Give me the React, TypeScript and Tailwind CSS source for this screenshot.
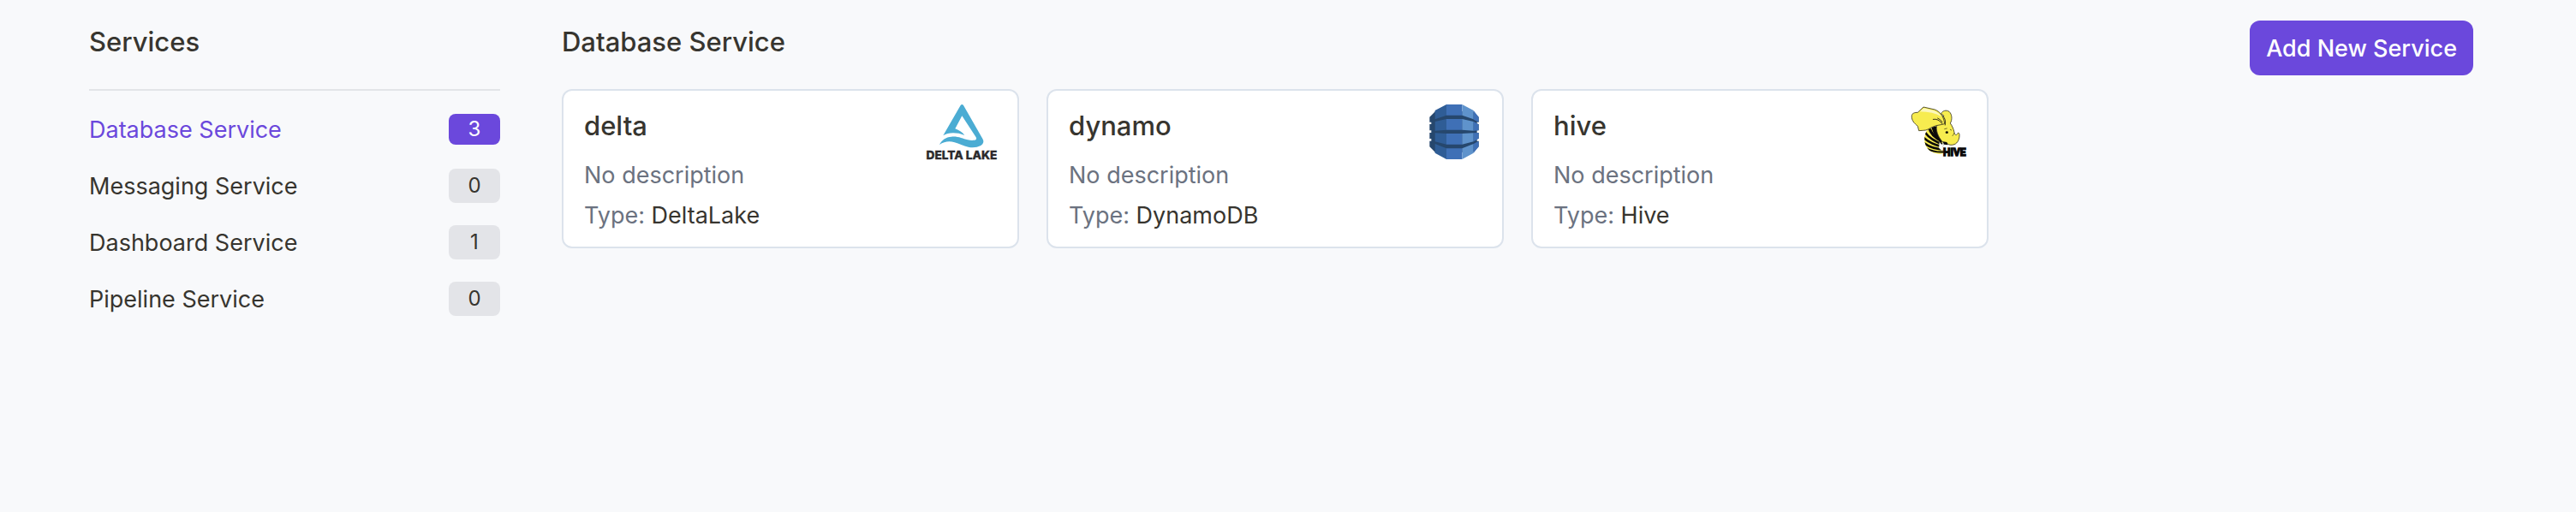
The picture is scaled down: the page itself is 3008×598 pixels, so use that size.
import type { ReactNode } from "react";

function DeltaLakeLogo() {
  return (
    <svg role="img" aria-label="Delta Lake" viewBox="36 36 246 192" className="h-16 w-[82px] overflow-visible">
      <path
        fill="#4bacd3"
        d="M155 39Q160 33 165 39L232 156Q241 170 226 180Q206 190 182 185C164 181 150 174 134 169C115 163 98 166 81 177C88 161 104 150 123 149C147 147 162 156 180 160C194 163 204 162 209 159Q212 157 209 151L160 76L136 121C150 127 162 134 169 144C155 138 142 136 129 136C114 136 104 140 94 145Z"
      />
      <text
        x="159"
        y="228"
        textAnchor="middle"
        fill="#2b2a2c"
        stroke="#2b2a2c"
        strokeWidth="1"
        className="font-['Inter',sans-serif] text-[41px] font-extrabold"
      >
        DELTA LAKE
      </text>
    </svg>
  );
}

function DynamoLogo() {
  return (
    <svg role="img" aria-label="DynamoDB" viewBox="48 36 192 192" className="size-16">
      <path
        fill="#26476d"
        d="M58 80L78 60L210 60L230 80V98H224V105H230V127H224V135H230V156H224V164H230V184L210 204H78L58 184V164H64V156H58V135H64V127H58V105H64V98H58Z"
      />
      <path fill="#2f5d96" d="M117 36L77 57V88L117 74ZM77 96L117 87V125L77 128ZM77 136L117 138V176L77 166ZM77 174L117 190V228L77 206Z" />
      <path fill="#3f70b6" d="M117 36H172V74H117ZM117 87H172V125H117ZM117 138H172V176H117ZM117 190H172V228H117Z" />
      <path fill="#5f93cc" d="M172 36L212 57V88L172 74ZM172 87L212 96V128L172 125ZM172 138L212 136V166L172 176ZM172 190L212 174V206L172 228Z" />
      <path fill="#3f70b6" d="M212 57L230 80V98L212 89ZM212 96L230 105V127L212 128ZM212 136L230 135V156L212 166ZM212 174L230 164V184L212 206Z" />
    </svg>
  );
}

function HiveLogo() {
  return (
    <svg role="img" aria-label="Hive" viewBox="36 36 192 192" className="size-16 overflow-visible">
      <defs>
        <clipPath id="hive-body">
          <path d="M94 122C80 138 78 164 88 184C97 200 116 210 138 209L152 205L138 186L146 170L130 150L122 118Z" />
        </clipPath>
      </defs>
      <path fill="#f7ec4f" d="M94 122C80 138 78 164 88 184C97 200 116 210 138 209L152 205L138 186L146 170L130 150L122 118Z" />
      <g clipPath="url(#hive-body)" fill="none" stroke="#0b0a08" strokeWidth="8">
        <path d="M98 112Q100 144 146 166" strokeWidth="10" />
        <path d="M82 132Q102 160 146 176" />
        <path d="M76 150Q102 176 146 184" />
        <path d="M78 170Q106 192 150 194" />
        <path d="M88 190Q118 206 156 202" strokeWidth="6" />
      </g>
      <path fill="#0b0a08" d="M106 116L124 112Q122 128 130 140Q134 152 144 164L138 170Q116 152 106 116Z" />
      <path
        fill="#f7ec4f"
        stroke="#37341b"
        strokeWidth="2.5"
        strokeLinejoin="round"
        d="M140 68C144 58 158 54 168 61C178 70 180 88 172 102C178 110 184 122 186 134C188 142 192 146 196 140C198 134 204 134 204 142C205 156 198 172 186 176C176 180 166 178 160 172L148 170C134 156 122 136 124 112L150 76Z"
      />
      <path
        fill="#f7ec4f"
        stroke="#37341b"
        strokeWidth="2.5"
        strokeLinejoin="round"
        d="M78 45L118 54C138 62 150 80 152 104C140 108 124 108 112 114C100 118 92 128 76 127L62 128L58 112C46 102 36 92 37 76C38 66 48 64 58 64Z"
      />
      <path fill="#fbf7bd" d="M80 49L116 58Q132 64 140 78Q112 62 66 61Z" />
      <path fill="none" stroke="#37341b" strokeWidth="3" strokeLinecap="round" d="M112 88Q130 84 144 104M146 76Q158 88 154 108M128 84Q138 88 144 98" />
      <ellipse cx="160" cy="134" rx="5" ry="4" fill="#171507" />
      <path fill="none" stroke="#37341b" strokeWidth="2" strokeLinecap="round" d="M152 122L160 120M186 136Q182 144 180 146M172 124L176 126" />
      <path fill="#ffffff" stroke="#8b8a80" strokeWidth="1" d="M134 168L142 176L150 174L146 184L152 194L142 198L132 188Z" />
      <path fill="#0b0a08" d="M146 166L160 168L164 178L150 176Z" />
      <text
        x="147"
        y="216"
        fill="#0b0a08"
        stroke="#0b0a08"
        strokeWidth="4"
        className="font-['Roboto',sans-serif] text-[36px] font-bold"
      >
        HIVE
      </text>
    </svg>
  );
}

interface Category {
  name: string;
  count: number;
}

interface Service {
  name: string;
  type: string;
  logo: ReactNode;
}

const categories: Category[] = [
  { name: "Database Service", count: 3 },
  { name: "Messaging Service", count: 0 },
  { name: "Dashboard Service", count: 1 },
  { name: "Pipeline Service", count: 0 },
];

const services: Service[] = [
  { name: "delta", type: "DeltaLake", logo: <DeltaLakeLogo /> },
  { name: "dynamo", type: "DynamoDB", logo: <DynamoLogo /> },
  { name: "hive", type: "Hive", logo: <HiveLogo /> },
];

function CategoryLink({ name, count, active }: Category & { active: boolean }) {
  return (
    <li>
      <a
        href="#"
        aria-current={active ? "page" : undefined}
        className={`flex h-10 items-center justify-between text-[27px] leading-10 ${active ? "text-[#6b48dc]" : "text-[#37352f]"}`}
      >
        <span className="pt-0.5">{name}</span>
        <span
          className={`flex w-15 items-center justify-center rounded-lg text-2xl ${
            active ? "h-9 bg-[#6b48dc] text-white" : "h-10 bg-[#e3e4e8] text-[#37352f]"
          }`}
        >
          {count}
        </span>
      </a>
    </li>
  );
}

function ServiceCard({ name, type, logo }: Service) {
  return (
    <article className="flex justify-between rounded-xl border-2 border-[#dce3ec] bg-white px-6 pt-4 pb-3.5">
      <div>
        <h3 className="text-[31px] leading-[50px] font-medium">{name}</h3>
        <p className="mt-[11px] text-[27px] leading-11 text-[#6b7280]">No description</p>
        <p className="mt-[3px] text-[27px] leading-11 text-[#6b7280]">
          Type: <span className="text-[#37352f]">{type}</span>
        </p>
      </div>
      <div className="shrink-0">{logo}</div>
    </article>
  );
}

export default function App() {
  return (
    <div className="flex min-h-screen gap-18 bg-[#f8f9fb] pr-30 pl-26 font-['Inter',sans-serif] text-[#37352f]">
      <aside className="w-120 shrink-0">
        <h2 className="pt-[25px] text-[31px] leading-12 font-medium">Services</h2>
        <hr className="mt-[31px] border-t-2 border-[#e3e5e8]" />
        <nav aria-label="Services" className="mt-[25px]">
          <ul className="flex flex-col gap-[26px]">
            {categories.map((category, index) => (
              <CategoryLink key={category.name} {...category} active={index === 0} />
            ))}
          </ul>
        </nav>
      </aside>
      <main className="min-w-0 grow">
        <header className="flex items-start justify-between pt-6">
          <h1 className="pt-px text-[31px] leading-12 font-medium">Database Service</h1>
          <button type="button" className="h-16 rounded-xl bg-[#6b48dc] px-[19px] pt-0.5 text-[27px] font-medium text-white">
            Add New Service
          </button>
        </header>
        <section aria-label="Database services" className="mt-4 grid grid-cols-4 gap-8">
          {services.map((service) => (
            <ServiceCard key={service.name} {...service} />
          ))}
        </section>
      </main>
    </div>
  );
}
